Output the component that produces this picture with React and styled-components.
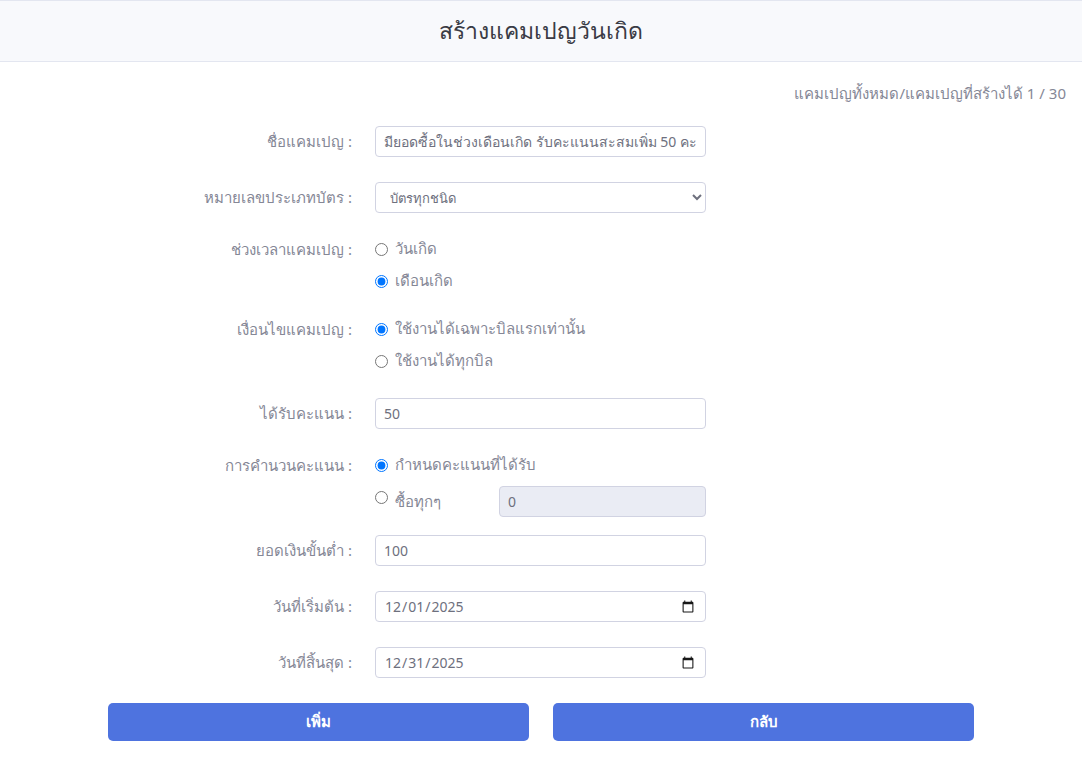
import React from 'react';
import styled, { createGlobalStyle } from 'styled-components';

const GlobalStyle = createGlobalStyle`
  body {
    margin: 0;
    background: #ffffff;
    font-family: "Noto Sans", "Open Sans", sans-serif;
    color: #858796;
  }
  * {
    box-sizing: border-box;
  }
`;

const Page = styled.div`
  width: 100%;
  min-height: 772px;
  background: #ffffff;
`;

const Header = styled.div`
  height: 62px;
  display: flex;
  align-items: center;
  justify-content: center;
  background: #f8f9fc;
  border-top: 1px solid #e3e6f0;
  border-bottom: 1px solid #e3e6f0;
`;

const Title = styled.h1`
  margin: 0;
  font-size: 23px;
  font-weight: 500;
  color: #3a3b45;
`;

const Quota = styled.div`
  display: flex;
  justify-content: flex-end;
  padding: 20px 16px 0 0;
  font-size: 15px;
  color: #858796;
  height: 42px;
`;

const Form = styled.form`
  width: 866px;
  margin: 22px auto 0;
`;

const Row = styled.div`
  display: flex;
  align-items: flex-start;
  gap: 23px;
  margin-bottom: ${(p) => p.mb || 25}px;
`;

const Label = styled.label`
  width: 244px;
  text-align: right;
  font-size: 15px;
  line-height: ${(p) => p.lh || 31}px;
  color: #858796;
  white-space: nowrap;
`;

const Field = styled.div`
  width: 331px;
  display: flex;
  flex-direction: column;
  gap: 8px;
`;

const Input = styled.input`
  width: ${(p) => p.w || '100%'};
  height: 31px;
  padding: 0 8px;
  border: 1px solid #d1d3e2;
  border-radius: 4px;
  font-family: inherit;
  font-size: 14px;
  color: #6e707e;
  background: ${(p) => (p.disabled ? '#eaecf4' : '#ffffff')};
  outline: none;
  &::-webkit-calendar-picker-indicator {
    opacity: 0.9;
  }
`;

const Select = styled.select`
  width: 100%;
  height: 31px;
  padding: 0 8px 0 10px;
  border: 1px solid #d1d3e2;
  border-radius: 4px;
  font-family: inherit;
  font-size: 13px;
  color: #6e707e;
  background: #ffffff;
`;

const Choice = styled.label`
  display: flex;
  align-items: center;
  height: ${(p) => p.h || 24}px;
  font-size: 15px;
  color: #858796;

  input {
    margin: ${(p) => (p.raised ? '0 7px 8px 0' : '0 7px 0 0')};
    width: 13px;
    height: 13px;
  }
`;

const ChoiceRow = styled.div`
  display: flex;
  align-items: center;
  margin-top: 1px;
`;

const ChoiceText = styled.span`
  width: 104px;
`;

const Buttons = styled.div`
  display: flex;
  gap: 24px;
`;

const Button = styled.button`
  flex: 1;
  height: 38px;
  border: none;
  border-radius: 5px;
  background: #4e73df;
  color: #ffffff;
  font-family: inherit;
  font-size: 15px;
  font-weight: 600;
`;

export default function App() {
  return (
    <Page>
      <GlobalStyle />
      <Header>
        <Title>สร้างแคมเปญวันเกิด</Title>
      </Header>
      <Quota>แคมเปญทั้งหมด/แคมเปญที่สร้างได้ 1 / 30</Quota>
      <Form onSubmit={(e) => e.preventDefault()}>
        <Row>
          <Label>ชื่อแคมเปญ :</Label>
          <Field>
            <Input defaultValue="มียอดซื้อในช่วงเดือนเกิด รับคะแนนสะสมเพิ่ม 50 คะแนน" />
          </Field>
        </Row>
        <Row mb={24}>
          <Label>หมายเลขประเภทบัตร :</Label>
          <Field>
            <Select defaultValue="all">
              <option value="all">บัตรทุกชนิด</option>
            </Select>
          </Field>
        </Row>
        <Row mb={24}>
          <Label lh={24}>ช่วงเวลาแคมเปญ :</Label>
          <Field>
            <Choice>
              <input type="radio" name="period" />
              วันเกิด
            </Choice>
            <Choice>
              <input type="radio" name="period" defaultChecked />
              เดือนเกิด
            </Choice>
          </Field>
        </Row>
        <Row>
          <Label lh={24}>เงื่อนไขแคมเปญ :</Label>
          <Field>
            <Choice>
              <input type="radio" name="cond" defaultChecked />
              ใช้งานได้เฉพาะบิลแรกเท่านั้น
            </Choice>
            <Choice>
              <input type="radio" name="cond" />
              ใช้งานได้ทุกบิล
            </Choice>
          </Field>
        </Row>
        <Row mb={24}>
          <Label>ได้รับคะแนน :</Label>
          <Field>
            <Input defaultValue="50" />
          </Field>
        </Row>
        <Row mb={18}>
          <Label lh={24}>การคำนวนคะแนน :</Label>
          <Field>
            <Choice>
              <input type="radio" name="calc" defaultChecked />
              กำหนดคะแนนที่ได้รับ
            </Choice>
            <ChoiceRow>
              <Choice h={31} raised>
                <input type="radio" name="calc" />
                <ChoiceText>ซื้อทุกๆ</ChoiceText>
              </Choice>
              <Input w="207px" defaultValue="0" disabled />
            </ChoiceRow>
          </Field>
        </Row>
        <Row>
          <Label>ยอดเงินขั้นต่ำ :</Label>
          <Field>
            <Input defaultValue="100" />
          </Field>
        </Row>
        <Row>
          <Label>วันที่เริ่มต้น :</Label>
          <Field>
            <Input type="date" defaultValue="2025-12-01" />
          </Field>
        </Row>
        <Row>
          <Label>วันที่สิ้นสุด :</Label>
          <Field>
            <Input type="date" defaultValue="2025-12-31" />
          </Field>
        </Row>
        <Buttons>
          <Button type="submit">เพิ่ม</Button>
          <Button type="button">กลับ</Button>
        </Buttons>
      </Form>
    </Page>
  );
}
